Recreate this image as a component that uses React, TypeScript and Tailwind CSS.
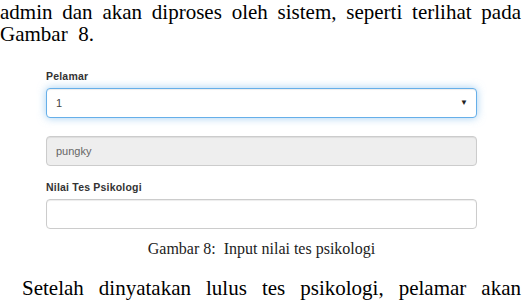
import React from "react";

const serif = { fontFamily: '"Liberation Serif", "Times New Roman", serif' };
const sans = { fontFamily: '"Liberation Sans", Arial, sans-serif' };

export default function App() {
  return (
    <div className="w-[523px] h-[303px] bg-white overflow-hidden text-black">
      <div className="pt-[1px] w-[521px] text-[21px] leading-[22px]" style={serif}>
        <div className="h-[22px] text-justify [text-align-last:justify] whitespace-nowrap">
          admin dan akan diproses oleh sistem, seperti terlihat pada
        </div>
        <div className="h-[22px] whitespace-pre">Gambar  8.</div>
      </div>

      <div className="ml-[46px] w-[431px] mt-[23px] flex flex-col" style={sans}>
        <label className="h-[17px] text-[10.5px] leading-[17px] font-bold text-[#333] tracking-[0.2px]">Pelamar</label>
        <div className="mt-[3px] h-[30px] rounded-[4px] border border-[#66afe9] bg-white flex items-center justify-between pl-[9px] pr-[8px] shadow-[inset_0_1px_1px_rgba(0,0,0,0.075),0_0_8px_rgba(102,175,233,0.6)]">
          <span className="text-[11px] text-[#444]">1</span>
          <span className="text-[8px] text-[#222] leading-none">▼</span>
        </div>
        <div className="mt-[18px] h-[30px] rounded-[4px] border border-[#ccc] bg-[#eee] flex items-center pl-[9px] shadow-[inset_0_1px_1px_rgba(0,0,0,0.075)]">
          <span className="text-[11px] text-[#666]">pungky</span>
        </div>
        <label className="mt-[13px] h-[17px] text-[10.5px] leading-[17px] font-bold text-[#333] tracking-[0.2px]">Nilai Tes Psikologi</label>
        <div className="mt-[3px] h-[30px] rounded-[4px] border border-[#ccc] bg-white shadow-[inset_0_1px_1px_rgba(0,0,0,0.075)]"></div>
      </div>

      <div className="mt-[11px] h-[18px] text-[16px] leading-[18px] text-center w-[523px] whitespace-pre text-[#222]" style={serif}>
        Gambar 8:  Input nilai tes psikologi
      </div>

      <div className="mt-[19px] ml-[22px] w-[499px] h-[22px] text-[21px] leading-[22px] text-justify [text-align-last:justify] whitespace-nowrap" style={serif}>
        Setelah dinyatakan lulus tes psikologi, pelamar akan
      </div>
    </div>
  );
}
